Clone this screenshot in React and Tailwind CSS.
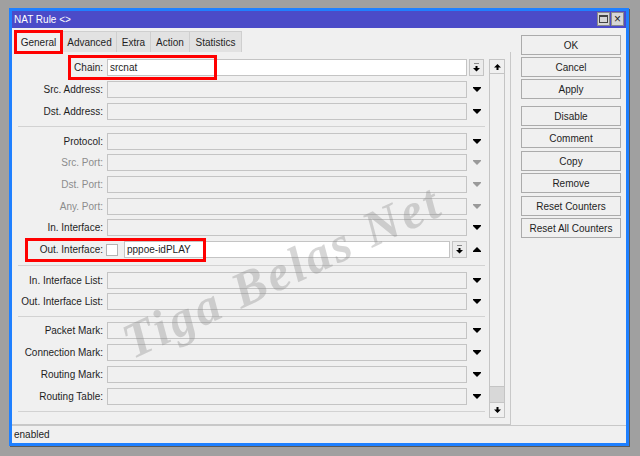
import React from "react";

const DownTri = ({ color = "#000" }) => (
  <svg width="8" height="5" viewBox="0 0 8 5">
    <path d="M0 0h8v1L4 5 0 1z" fill={color} />
  </svg>
);

const UpTri = () => (
  <svg width="8" height="5" viewBox="0 0 8 5">
    <path d="M0 5h8V4L4 0 0 4z" fill="#000" />
  </svg>
);

// bar + down arrow used on the little combo buttons
const BarArrow = () => (
  <svg width="7" height="9" viewBox="0 0 7 9">
    <rect x="1" y="0" width="5" height="1" fill="#8a8a8a" />
    <path d="M2.5 3h2v2H7L3.5 8.5 0 5h2.5z" fill="#000" />
  </svg>
);

const ScrollArrow = ({ up }) => (
  <svg width="7" height="6" viewBox="0 0 7 6" className={up ? "" : "rotate-180"}>
    <path d="M3.5 0L7 3.5H4.5V6h-2V3.5H0z" fill="#000" />
  </svg>
);

const Field = () => (
  <div className="ml-[4px] w-[360px] h-[17px] border border-[#c4c4c4] bg-[#f0f0f0]" />
);

const Row = ({ label, h = "h-[22px]", disabled, children, arrow = "down" }) => (
  <div className={`flex items-start pt-[2px] ${h}`}>
    <div
      className={`w-[91px] text-right h-[17px] leading-[17px] whitespace-nowrap ${
        disabled ? "text-[#8c8c8c]" : "text-[#1e1e1e]"
      }`}
    >
      {label}
    </div>
    {children || <Field />}
    <div className="w-[19px] h-[17px] flex items-center justify-center">
      {arrow === "down" && <DownTri color={disabled ? "#9a9a9a" : "#000"} />}
      {arrow === "up" && <UpTri />}
      {arrow === "box" && (
        <div className="w-[15px] h-[17px] border border-[#c4c4c4] bg-[#ececec] flex items-center justify-center">
          <BarArrow />
        </div>
      )}
    </div>
  </div>
);

// separator block; padding instead of margin so nothing collapses
const Sep = ({ h, pt }) => (
  <div className={`${h} ${pt}`}>
    <div className="ml-[6px] w-[467px] border-t border-[#d2d2d2]" />
  </div>
);

const tabs = [
  { name: "General", w: "w-[49px]", active: true },
  { name: "Advanced", w: "w-[54px]" },
  { name: "Extra", w: "w-[34px]" },
  { name: "Action", w: "w-[39px]" },
  { name: "Statistics", w: "w-[52px]" },
];

const buttons = [
  { name: "OK", mt: "" },
  { name: "Cancel", mt: "mt-[2px]" },
  { name: "Apply", mt: "mt-[2px]" },
  { name: "Disable", mt: "mt-[7px]" },
  { name: "Comment", mt: "mt-[2px]" },
  { name: "Copy", mt: "mt-[3px]" },
  { name: "Remove", mt: "mt-[2px]" },
  { name: "Reset Counters", mt: "mt-[3px]" },
  { name: "Reset All Counters", mt: "mt-[2px]" },
];

export default function App() {
  return (
    <div className="relative w-[640px] h-[456px] bg-[#a0a0a0] pt-[8px] pl-[9px] overflow-hidden font-['Liberation_Sans',Arial,sans-serif] text-[10px] text-[#1e1e1e]">
      <div className="w-[620px] h-[438px] border-[3px] border-[#1f80ff] shadow-[1px_1px_0_#5a5a5a] flex flex-col">
        {/* title bar */}
        <div className="h-[17px] shrink-0 bg-[#4b4bc8] flex items-start">
          <div className="pl-[2px] h-[17px] leading-[17px] text-white">NAT Rule &lt;&gt;</div>
          <div className="ml-auto flex gap-[1px] mt-[1px] mr-[2px]">
            <div className="w-[13px] h-[14px] bg-[#d6d6d6] border border-[#8a8a8a] flex items-center justify-center">
              <div className="w-[9px] h-[8px] border border-[#444] border-t-[2px]" />
            </div>
            <div className="w-[13px] h-[14px] bg-[#d6d6d6] border border-[#8a8a8a] flex items-center justify-center text-[#222] text-[12px] leading-none">
              ×
            </div>
          </div>
        </div>

        <div className="flex-1 min-h-0 bg-[#f0f0f0] flex flex-col">
          <div className="flex flex-1 min-h-0">
            {/* tabs + form */}
            <div className="w-[499px] flex flex-col">
              <div className="h-[24px] shrink-0 pt-[3px] pl-[2px] flex">
                {tabs.map((t) => (
                  <div
                    key={t.name}
                    className={`${t.w} h-[21px] flex items-center justify-center border-t border-r border-[#cfcfcf] ${
                      t.active ? "bg-[#f0f0f0] border-l" : "bg-[#e2e2e2]"
                    }`}
                  >
                    {t.name}
                  </div>
                ))}
              </div>
              <div className="flex-1 min-h-0 border-r border-b border-[#c8c8c8] pt-[5px] flex">
                <div className="w-[474px]">
                  <Row label="Chain:" arrow="box">
                    <div className="ml-[4px] w-[360px] h-[17px] border border-[#c4c4c4] bg-white pl-[2px] leading-[15px]">
                      srcnat
                    </div>
                  </Row>
                  <Row label="Src. Address:" />
                  <Row label="Dst. Address:" />
                  <Sep h="h-[8px]" pt="pt-[3px]" />
                  <Row label="Protocol:" h="h-[21px]" />
                  <Row label="Src. Port:" disabled />
                  <Row label="Dst. Port:" disabled />
                  <Row label="Any. Port:" h="h-[21px]" disabled />
                  <Row label="In. Interface:" />
                  <Row label="Out. Interface:" arrow="up">
                    <div className="ml-[3px] mt-[3px] w-[12px] h-[12px] border border-[#b4b4b4] bg-white" />
                    <div className="ml-[6px] w-[326px] h-[17px] border border-[#c4c4c4] bg-white pl-[2px] leading-[15px]">
                      pppoe-idPLAY
                    </div>
                    <div className="ml-[2px] w-[15px] h-[17px] border border-[#c4c4c4] bg-[#ececec] flex items-center justify-center">
                      <BarArrow />
                    </div>
                  </Row>
                  <Sep h="h-[9px]" pt="pt-[4px]" />
                  <Row label="In. Interface List:" h="h-[21px]" />
                  <Row label="Out. Interface List:" />
                  <Sep h="h-[7px]" pt="pt-[3px]" />
                  <Row label="Packet Mark:" />
                  <Row label="Connection Mark:" />
                  <Row label="Routing Mark:" />
                  <Row label="Routing Table:" />
                  <Sep h="h-[8px]" pt="pt-[3px]" />
                </div>
                {/* scrollbar */}
                <div className="ml-[3px] mt-[2px] w-[16px] h-[359px] border border-[#c4c4c4] bg-[#f0f0f0] flex flex-col">
                  <div className="h-[14px] border-b border-[#c4c4c4] flex items-center justify-center">
                    <ScrollArrow up />
                  </div>
                  <div className="flex-1" />
                  <div className="h-[17px] bg-[#d8d8d8] border-y border-[#c4c4c4]" />
                  <div className="h-[14px] flex items-center justify-center">
                    <ScrollArrow />
                  </div>
                </div>
              </div>
            </div>

            {/* side buttons */}
            <div className="flex-1 pt-[7px] pl-[10px] flex flex-col">
              {buttons.map((b) => (
                <div
                  key={b.name}
                  className={`${b.mt} w-[100px] h-[20px] border border-[#ababab] bg-[#f0f0f0] flex items-center justify-center`}
                >
                  {b.name}
                </div>
              ))}
            </div>
          </div>

          {/* status bar */}
          <div className="h-[18px] shrink-0 border-t border-[#c8c8c8] pl-[2px] leading-[17px]">enabled</div>
        </div>
      </div>

      {/* watermark */}
      <div className="absolute left-[92px] top-[246px] w-[380px] text-center -rotate-[25deg] pointer-events-none font-['Liberation_Serif',serif] italic font-bold text-[50px] tracking-[3px] text-[#8a8a8a]/35 leading-none">
        Tiga Belas Net
      </div>

      {/* red annotation boxes */}
      <div className="absolute left-[14px] top-[30px] w-[49px] h-[24px] border-[3px] border-[#ff0000] pointer-events-none" />
      <div className="absolute left-[68px] top-[55px] w-[149px] h-[25px] border-[3px] border-[#ff0000] pointer-events-none" />
      <div className="absolute left-[25px] top-[238px] w-[181px] h-[24px] border-[3px] border-[#ff0000] pointer-events-none" />
    </div>
  );
}
